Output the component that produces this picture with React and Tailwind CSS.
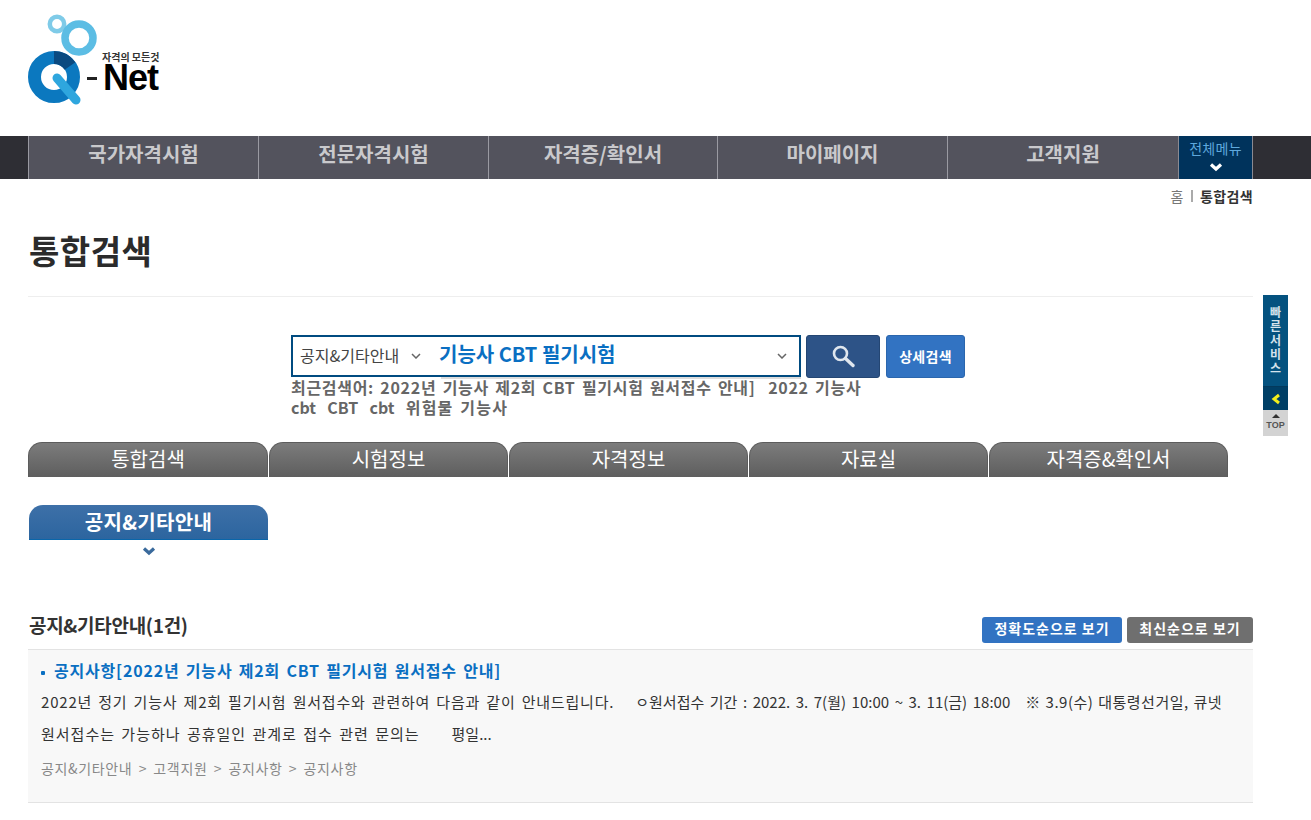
import React from 'react';

const navItems = [
  { label: '국가자격시험', width: 'w-[230px]' },
  { label: '전문자격시험', width: 'w-[230px]' },
  { label: '자격증/확인서', width: 'w-[229px]' },
  { label: '마이페이지', width: 'w-[230px]' },
  { label: '고객지원', width: 'w-[231px]' },
];
const tabs = ['통합검색', '시험정보', '자격정보', '자료실', '자격증&확인서'];

function Chevron({ className, color = '#fff' }) {
  return (
    <svg className={className} viewBox="0 0 14 10" fill="none">
      <path d="M2 2.5 L7 7 L12 2.5" stroke={color} strokeWidth="3.2" />
    </svg>
  );
}

function SmallCaret({ className }) {
  return (
    <svg className={className} viewBox="0 0 10 6" fill="none">
      <path d="M1 1 L5 5 L9 1" stroke="#666" strokeWidth="1.5" />
    </svg>
  );
}

// logo marks drawn in page coordinates, offset by the header padding
function Logo() {
  return (
    <div className="relative w-[140px] h-[92px]">
      <svg className="absolute left-0 top-0" width="140" height="92" viewBox="28 14 140 92" fill="none">
        <circle cx="57" cy="24" r="7.2" stroke="#7fcbe8" strokeWidth="4.5" />
        <circle cx="79" cy="38" r="14" stroke="#5cbde4" strokeWidth="7.5" />
        <circle cx="54" cy="77" r="19.5" stroke="#0b78bf" strokeWidth="13" />
        <path d="M54 57.5 A19.5 19.5 0 0 1 70 66" stroke="#0a4a80" strokeWidth="13" />
        <path d="M57 78 L76 100" stroke="#2ea6de" strokeWidth="9" strokeLinecap="round" />
        <rect x="87" y="77" width="10" height="3" fill="#222" />
      </svg>
      <span className="absolute left-[74px] top-[37px] text-[10px] leading-[12px] font-bold text-[#333] whitespace-nowrap">자격의 모든것</span>
      <span className="absolute left-[75px] top-[43px] text-[36px] leading-[42px] font-bold text-black tracking-[-1px] whitespace-nowrap [font-family:'Liberation_Sans',sans-serif]">Net</span>
    </div>
  );
}

export default function App() {
  return (
    <div className="relative w-[1311px] h-[820px] overflow-hidden bg-white font-['Noto_Sans_CJK_KR',sans-serif] text-[#333]">
      <header className="h-[136px] pl-[28px] pt-[14px]">
        <Logo />
      </header>

      <nav className="h-[43px] bg-[#2e2e34] pl-[28px]">
        <div className="flex h-full w-[1225px]">
          {navItems.map((item) => (
            <div key={item.label} className={`${item.width} border-l border-[#9a9aa2] bg-[#53535d] flex items-center justify-center pb-[8px] text-[20px] font-bold text-[#c9c9cc]`}>
              {item.label}
            </div>
          ))}
          <div className="w-[75px] border-x border-[#8a8a92] bg-[#00335c] flex flex-col items-center pt-[2px]">
            <span className="text-[14px] leading-[20px] tracking-[0.3px] text-[#5ea8dc]">전체메뉴</span>
            <Chevron className="w-[14px] h-[10px] mt-[4px]" />
          </div>
        </div>
      </nav>

      <div className="w-[1225px] ml-[28px]">
        <div className="h-[36px] pb-[2px] flex items-center justify-end text-[14px] tracking-[0.4px] text-[#777]">
          <span>홈</span>
          <span className="w-[2px] h-[12px] bg-[#aaa] mx-[7px]" />
          <span className="font-bold text-[#333]">통합검색</span>
        </div>
        <h1 className="h-[82px] pl-[1px] text-[33px] leading-[70px] tracking-[0.5px] font-bold text-[#2b2b2b] border-b border-[#eee]">통합검색</h1>

        {/* search box */}
        <div className="pl-[263px] pt-[38px]">
          <div className="flex">
            <div className="relative w-[510px] h-[42px] border-2 border-[#004b80] flex items-center">
              <span className="pl-[7px] pb-[2px] text-[16px] text-[#444] w-[118px] whitespace-nowrap">공지&기타안내</span>
              <SmallCaret className="w-[10px] h-[6px]" />
              <span className="ml-[18px] text-[20px] font-bold text-[#0a6fc2] pb-[4px]">기능사 CBT 필기시험</span>
              <SmallCaret className="w-[10px] h-[6px] ml-auto mr-[12px]" />
              <span className="absolute left-[148px] right-[-2px] bottom-[-4px] h-[2px] bg-[#ddd]" />
            </div>
            <button className="ml-[5px] w-[74px] h-[43px] rounded-[3px] bg-[#2d5387] border border-[#244673] flex items-center justify-center">
              <svg width="26" height="26" viewBox="0 0 26 26" fill="none">
                <circle cx="10.5" cy="9.5" r="6.5" stroke="#dfe6ee" strokeWidth="2.6" />
                <path d="M15.5 14.5 L23 21.5" stroke="#dfe6ee" strokeWidth="3.4" strokeLinecap="round" />
              </svg>
            </button>
            <button className="ml-[6px] w-[79px] h-[43px] rounded-[3px] bg-[#3273c2] border border-[#2b66ad] text-white text-[14px] tracking-[0.3px] font-bold">상세검색</button>
          </div>
          <div className="w-[590px] -mt-[1px] text-[16px] leading-[20px] font-bold text-[#666]">
            <div className="whitespace-nowrap tracking-[0.7px] [word-spacing:2px]">최근검색어: 2022년 기능사 제2회 CBT 필기시험 원서접수 안내]&nbsp; 2022 기능사</div>
            <div className="whitespace-nowrap [word-spacing:2px]">
              cbt&nbsp; CBT&nbsp; cbt&nbsp; <span className="tracking-[1.2px]">위험물 기능사</span>
            </div>
          </div>
        </div>

        {/* category tabs */}
        <div className="flex gap-[1px] mt-[25px] w-[1200px]">
          {tabs.map((tab, i) => (
            <div key={tab} className={`${i === 0 ? 'w-[240px]' : 'w-[239px]'} h-[35px] pb-[3px] rounded-t-[14px] border-t border-x border-[#5c5c5c] bg-gradient-to-b from-[#7c7c7c] to-[#5e5e5e] flex items-center justify-center text-[20px] text-white`}>
              {tab}
            </div>
          ))}
        </div>

        <div className="mt-[28px] ml-[1px] w-[239px]">
          <div className="h-[35px] rounded-t-[14px] bg-gradient-to-b from-[#3d70a8] to-[#2c659f] border-b border-[#0a66aa] flex items-center justify-center text-[20px] tracking-[0.3px] font-bold text-white">
            공지&기타안내
          </div>
          <Chevron className="w-[14px] h-[10px] mx-auto mt-[6px]" color="#3a6a9c" />
        </div>

        {/* results */}
        <div className="flex items-end justify-between mt-[52px] h-[35px]">
          <h2 className="self-start pl-[1px] text-[19px] leading-[34px] font-bold text-[#333] tracking-[-0.3px]">공지&기타안내(1건)</h2>
          <div className="flex gap-[5px]">
            <button className="w-[140px] h-[26px] pb-[3px] rounded-[3px] bg-[#3273c2] text-white text-[14px] font-bold tracking-[1px]">정확도순으로 보기</button>
            <button className="w-[126px] h-[26px] pb-[3px] rounded-[3px] bg-[#6f6f6f] text-white text-[14px] font-bold tracking-[1px]">최신순으로 보기</button>
          </div>
        </div>
        <div className="mt-[6px] h-[154px] bg-[#f8f8f8] border-y border-[#e3e3e3] px-[13px] pt-[8px]">
          <div className="text-[16px] leading-[24px] tracking-[0.8px] [word-spacing:2px] font-bold text-[#0a6fc2]">
            <span className="inline-block w-[4px] h-[4px] rounded-[1px] bg-[#0a6fc2] align-middle mr-[9px]" />
            공지사항[2022년 기능사 제2회 CBT 필기시험 원서접수 안내]
          </div>
          <div className="mt-[4px] text-[15px] leading-[32px] text-[#333] whitespace-nowrap">
            <div>
              <span className="tracking-[0.8px] [word-spacing:2px]">2022년 정기 기능사 제2회 필기시험 원서접수와 관련하여 다음과 같이 안내드립니다.</span>
              <span className="ml-[21px] [word-spacing:2.2px]">ㅇ원서접수 기간 : 2022. 3. 7(월) 10:00 ~ 3. 11(금) 18:00</span>
              <span className="ml-[15px] tracking-[0.5px] [word-spacing:1px]">※ 3.9(수) 대통령선거일, 큐넷</span>
            </div>
            <div>
              <span className="tracking-[1px] [word-spacing:2px]">원서접수는 가능하나 공휴일인 관계로 접수 관련 문의는</span>
              <span className="ml-[32px]">평일...</span>
            </div>
          </div>
          <div className="mt-[8px] text-[14px] leading-[20px] tracking-[0.65px] [word-spacing:2.5px] text-[#888]">공지&기타안내 &gt; 고객지원 &gt; 공지사항 &gt; 공지사항</div>
        </div>
      </div>

      {/* quick service rail */}
      <div className="absolute left-[1263px] top-[295px] w-[25px]">
        <div className="h-[91px] bg-[#04527f] flex flex-col items-center pt-[10px] text-[12px] leading-[14px] font-bold text-[#d5e3ec]">
          <span>빠</span><span>른</span><span>서</span><span>비</span><span>스</span>
        </div>
        <div className="h-[24px] bg-[#003f66] border-t border-[#03395c] flex items-center justify-center">
          <svg width="10" height="12" viewBox="0 0 10 12" fill="none">
            <path d="M8 2 L3 6 L8 10" stroke="#f2ee1c" strokeWidth="3" />
          </svg>
        </div>
        <div className="h-[26px] bg-[#d3d3d3] flex flex-col items-center pt-[4px]">
          <span className="w-0 h-0 border-x-[4px] border-x-transparent border-b-[4px] border-b-[#333]" />
          <span className="text-[9px] leading-[14px] font-bold text-[#555] [font-family:'Liberation_Sans',sans-serif]">TOP</span>
        </div>
      </div>
    </div>
  );
}
